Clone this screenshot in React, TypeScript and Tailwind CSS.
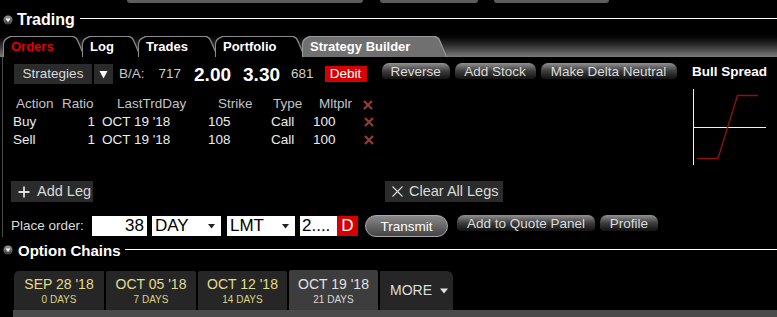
import React from "react";

const font = "font-['Liberation_Sans',Arial,sans-serif]";

function SectionIcon() {
  return (
    <svg width="10" height="10" viewBox="0 0 10 10" className="shrink-0">
      <defs>
        <linearGradient id="ic" x1="0" y1="0" x2="0" y2="1">
          <stop offset="0" stopColor="#9a9a9a" />
          <stop offset="1" stopColor="#3a3a3a" />
        </linearGradient>
      </defs>
      <circle cx="5" cy="5" r="4.6" fill="url(#ic)" />
      <path d="M2.6 3.6 H7.4 L5 7 Z" fill="#fff" />
    </svg>
  );
}

const tabShape =
  "[clip-path:polygon(0_7px,1px_4px,3px_2px,7px_0,calc(100%-11px)_0,calc(100%-8px)_2px,calc(100%-6px)_6px,100%_100%,0_100%)]";

function Tab({
  label,
  w,
  active,
  red,
}: {
  label: string;
  w: string;
  active?: boolean;
  red?: boolean;
}) {
  const color = red ? "text-[#e00000]" : "text-white";
  return (
    <div className={`${w} h-[21px] -mr-[3px] pt-[1px] pl-[1px] ${tabShape} ${active ? "bg-[#9a9a9a]" : "bg-[#8a8a8a]"}`}>
      <div
        className={`h-full w-[calc(100%-1px)] ${tabShape} ${active ? "bg-[#707070]" : "bg-black"} ${color} font-bold text-[13px] leading-[20px] pl-[7px]`}
      >
        {label}
      </div>
    </div>
  );
}

function Pill({ children, w }: { children: React.ReactNode; w: string }) {
  return (
    <div
      className={`${w} h-[16px] rounded-t-[7px] rounded-b-[4px] bg-linear-to-b from-[#939393] via-[#3e3e3e] to-[#121212] text-[#dcdcdc] text-[13.5px] leading-[17px] text-center`}
    >
      {children}
    </div>
  );
}

function RedX({ className = "" }: { className?: string }) {
  return (
    <svg width="10" height="10" viewBox="0 0 10 10" className={className}>
      <path d="M1 1 L9 9 M9 1 L1 9" stroke="#8e3d33" strokeWidth="2.4" />
    </svg>
  );
}

const legs = [
  { action: "Buy", strike: "105" },
  { action: "Sell", strike: "108" },
];

const dates = [
  { d: "SEP 28 '18", n: "0 DAYS", w: "w-[90px]" },
  { d: "OCT 05 '18", n: "7 DAYS", w: "w-[90px]" },
  { d: "OCT 12 '18", n: "14 DAYS", w: "w-[89px]" },
];

export default function App() {
  return (
    <div className={`w-[777px] h-[317px] bg-black overflow-hidden ${font}`}>
      {/* cut-off buttons from above */}
      <div className="flex h-[4px]">
        <div className="ml-[127px] w-[236px] h-[3px] bg-[#5c5c5c] rounded-b-[3px]" />
        <div className="ml-[17px] w-[98px] h-[3px] bg-[#5c5c5c] rounded-b-[3px]" />
        <div className="ml-[16px] w-[115px] h-[3px] bg-[#5c5c5c] rounded-b-[3px]" />
      </div>

      {/* Trading header */}
      <div className="h-[28px] pt-[3px] flex items-center pl-[3px]">
        <SectionIcon />
        <span className="ml-[4px] text-white font-bold text-[16px] leading-none">Trading</span>
        <div className="ml-[5px] flex-1 h-px bg-white -mt-[2px]" />
      </div>

      {/* tab band */}
      <div className="h-[25px] bg-linear-to-b from-[#000] via-[#2a2a2a] to-[#7c7c7c] flex items-end pl-[3px]">
        <Tab label="Orders" w="w-[82px]" red />
        <Tab label="Log" w="w-[59px]" />
        <Tab label="Trades" w="w-[80px]" />
        <Tab label="Portfolio" w="w-[90px]" />
        <Tab label="Strategy Builder" w="w-[145px]" active />
      </div>

      {/* strategy builder panel */}
      <div className="flex h-[180px]">
        <div className="ml-[2px] w-px h-[180px] bg-[#4a4a4a]" />
        <div className="w-[683px] pt-[7px]">
          {/* row 1 */}
          <div className="flex items-center h-[20px]">
            <div className="ml-[11px] w-[78px] h-[20px] bg-[#2b2b2b] text-[#dadada] text-[13.5px] leading-[20px] text-center">
              Strategies
            </div>
            <div className="ml-[2px] w-[19px] h-[20px] bg-[#2b2b2b] flex items-center justify-center">
              <svg width="9" height="9" viewBox="0 0 9 9">
                <path d="M0.5 1 H8.5 L4.5 8.5 Z" fill="#fff" />
              </svg>
            </div>
            <span className="ml-[6px] text-[#c8c8c8] text-[13.5px]">B/A:</span>
            <span className="ml-[14px] text-[#d0d0d0] text-[13.5px]">717</span>
            <span className="ml-[13px] text-white font-bold text-[19px] leading-none">2.00</span>
            <span className="ml-[12px] text-white font-bold text-[19px] leading-none">3.30</span>
            <span className="ml-[11px] text-[#d0d0d0] text-[13.5px]">681</span>
            <div className="ml-[11px] h-[16px] w-[42px] bg-[#d50000] text-white text-[13.5px] leading-[16px] text-center">
              Debit
            </div>
            <div className="ml-[15px] flex gap-[5px] self-start -mt-[1px]">
              <Pill w="w-[68px]">Reverse</Pill>
              <Pill w="w-[81px]">Add Stock</Pill>
              <Pill w="w-[136px]">Make Delta Neutral</Pill>
            </div>
          </div>

          {/* legs table */}
          <div className="mt-[12px] text-[13.5px]">
            <div className="flex h-[17px] items-center text-[#c4c4c4]">
              <div className="w-[57px] pl-[13px]">Action</div>
              <div className="w-[38px] pl-[2px]">Ratio</div>
              <div className="w-[100px] pl-[19px]">LastTrdDay</div>
              <div className="w-[67px] pl-[20px]">Strike</div>
              <div className="w-[43px] pl-[8px]">Type</div>
              <div className="w-[55px] pl-[11px]">Mltplr</div>
              <div className="w-[18px] flex"><RedX /></div>
            </div>
            {legs.map((l) => (
              <div key={l.action} className="flex h-[18px] items-center text-[#ececec]">
                <div className="w-[57px] pl-[10px]">{l.action}</div>
                <div className="w-[38px] text-right pr-[3px]">1</div>
                <div className="w-[100px] pl-[4px]">OCT 19 '18</div>
                <div className="w-[67px] pl-[10px]">{l.strike}</div>
                <div className="w-[43px] pl-[6px]">Call</div>
                <div className="w-[55px] pl-[5px]">100</div>
                <div className="w-[18px] pl-[1px] flex"><RedX /></div>
              </div>
            ))}
          </div>

          {/* add / clear legs */}
          <div className="mt-[32px] flex h-[21px]">
            <div className="ml-[8px] w-[82px] bg-[#2b2b2b] flex items-center text-[#dadada] text-[14.5px]">
              <svg width="12" height="12" viewBox="0 0 12 12" className="ml-[7px]">
                <path d="M6 0.5 V11.5 M0.5 6 H11.5" stroke="#e0e0e0" strokeWidth="1.8" />
              </svg>
              <span className="ml-[7px]">Add Leg</span>
            </div>
            <div className="ml-[292px] w-[118px] bg-[#2b2b2b] flex items-center text-[#dadada] text-[14.5px]">
              <svg width="11" height="11" viewBox="0 0 11 11" className="ml-[7px]">
                <path d="M0.5 0.5 L10.5 10.5 M10.5 0.5 L0.5 10.5" stroke="#dcdcdc" strokeWidth="1.1" />
              </svg>
              <span className="ml-[6px]">Clear All Legs</span>
            </div>
          </div>

          {/* place order */}
          <div className="mt-[13px] flex items-center h-[22px]">
            <span className="ml-[8px] w-[73px] text-[#dadada] text-[13.5px]">Place order:</span>
            <div className="ml-[8px] w-[55px] h-[20px] bg-white text-black text-[17px] leading-[20px] text-right pr-[3px]">
              38
            </div>
            <div className="ml-[5px] w-[69px] h-[20px] bg-white text-black text-[17px] leading-[20px] pl-[3px] flex items-center justify-between pr-[6px]">
              DAY
              <svg width="7" height="5" viewBox="0 0 7 5"><path d="M0 0 H7 L3.5 4.5 Z" fill="#222" /></svg>
            </div>
            <div className="ml-[6px] w-[68px] h-[20px] bg-white text-black text-[17px] leading-[20px] pl-[3px] flex items-center justify-between pr-[6px]">
              LMT
              <svg width="7" height="5" viewBox="0 0 7 5"><path d="M0 0 H7 L3.5 4.5 Z" fill="#222" /></svg>
            </div>
            <div className="ml-[5px] w-[37px] h-[20px] bg-white text-black text-[17px] leading-[20px] pl-[2px]">
              2....
            </div>
            <div className="w-[21px] h-[20px] bg-[#d50000] text-white text-[17px] leading-[20px] text-center">
              D
            </div>
            <div className="ml-[7px] w-[83px] h-[22px] rounded-full border border-[#a8a8a8] bg-linear-to-b from-[#8a8a8a] to-[#444] text-white text-[13.5px] leading-[21px] text-center">
              Transmit
            </div>
            <div className="ml-[9px] flex gap-[5px] self-start">
              <Pill w="w-[138px]">Add to Quote Panel</Pill>
              <Pill w="w-[58px]">Profile</Pill>
            </div>
          </div>
        </div>

        {/* strategy picture */}
        <div className="pt-[6px] pl-[6px]">
          <div className="text-white font-bold text-[13.5px] leading-[17px]">Bull Spread</div>
          <svg width="80" height="80" viewBox="0 0 80 80" className="mt-[8px] -ml-[2px]">
            <path d="M3.5 1 V77" stroke="#f2f2f2" strokeWidth="1" />
            <path d="M3.5 39.5 H76" stroke="#f2f2f2" strokeWidth="1" />
            <path d="M7 70.5 H28 L47.5 7.5 H68" stroke="#8e1010" strokeWidth="1.4" fill="none" />
          </svg>
        </div>
      </div>

      {/* option chains header */}
      <div className="h-[20px] mt-[3px] flex items-center pl-[3px]">
        <SectionIcon />
        <span className="ml-[5px] text-white font-bold text-[15px] leading-none">Option Chains</span>
        <div className="ml-[4px] flex-1 h-px bg-white -mt-[2px]" />
      </div>

      {/* expiry tabs */}
      <div className="mt-[10px] flex items-end h-[40px] pl-[14px] gap-[2px]">
        {dates.map((t, i) => (
          <div
            key={t.d}
            className={`${t.w} h-[39px] bg-[#262626] ${i === 0 ? "rounded-tl-[5px]" : "rounded-t-[2px]"} flex flex-col items-center pt-[5px]`}
          >
            <div className="text-[#e2dd8e] text-[14px] leading-[16px]">{t.d}</div>
            <div className="text-[#d8d38a] text-[10px] leading-[13px] mt-[1px]">{t.n}</div>
          </div>
        ))}
        <div className="w-[89px] h-[40px] bg-[#3d3d3d] rounded-t-[2px] flex flex-col items-center pt-[6px]">
          <div className="text-[#e2e2e2] text-[14px] leading-[16px]">OCT 19 '18</div>
          <div className="text-[#d8d8d8] text-[10px] leading-[13px] mt-[1px]">21 DAYS</div>
        </div>
        <div className="w-[73px] h-[39px] bg-[#262626] rounded-tr-[6px] flex items-center pl-[10px] text-[#dedede] text-[14px]">
          MORE
          <svg width="8" height="6" viewBox="0 0 8 6" className="ml-[8px]"><path d="M0 0.5 H8 L4 5.5 Z" fill="#e0e0e0" /></svg>
        </div>
      </div>
      <div className="ml-[13px] h-[7px] bg-[#4a4a4a]" />
    </div>
  );
}
